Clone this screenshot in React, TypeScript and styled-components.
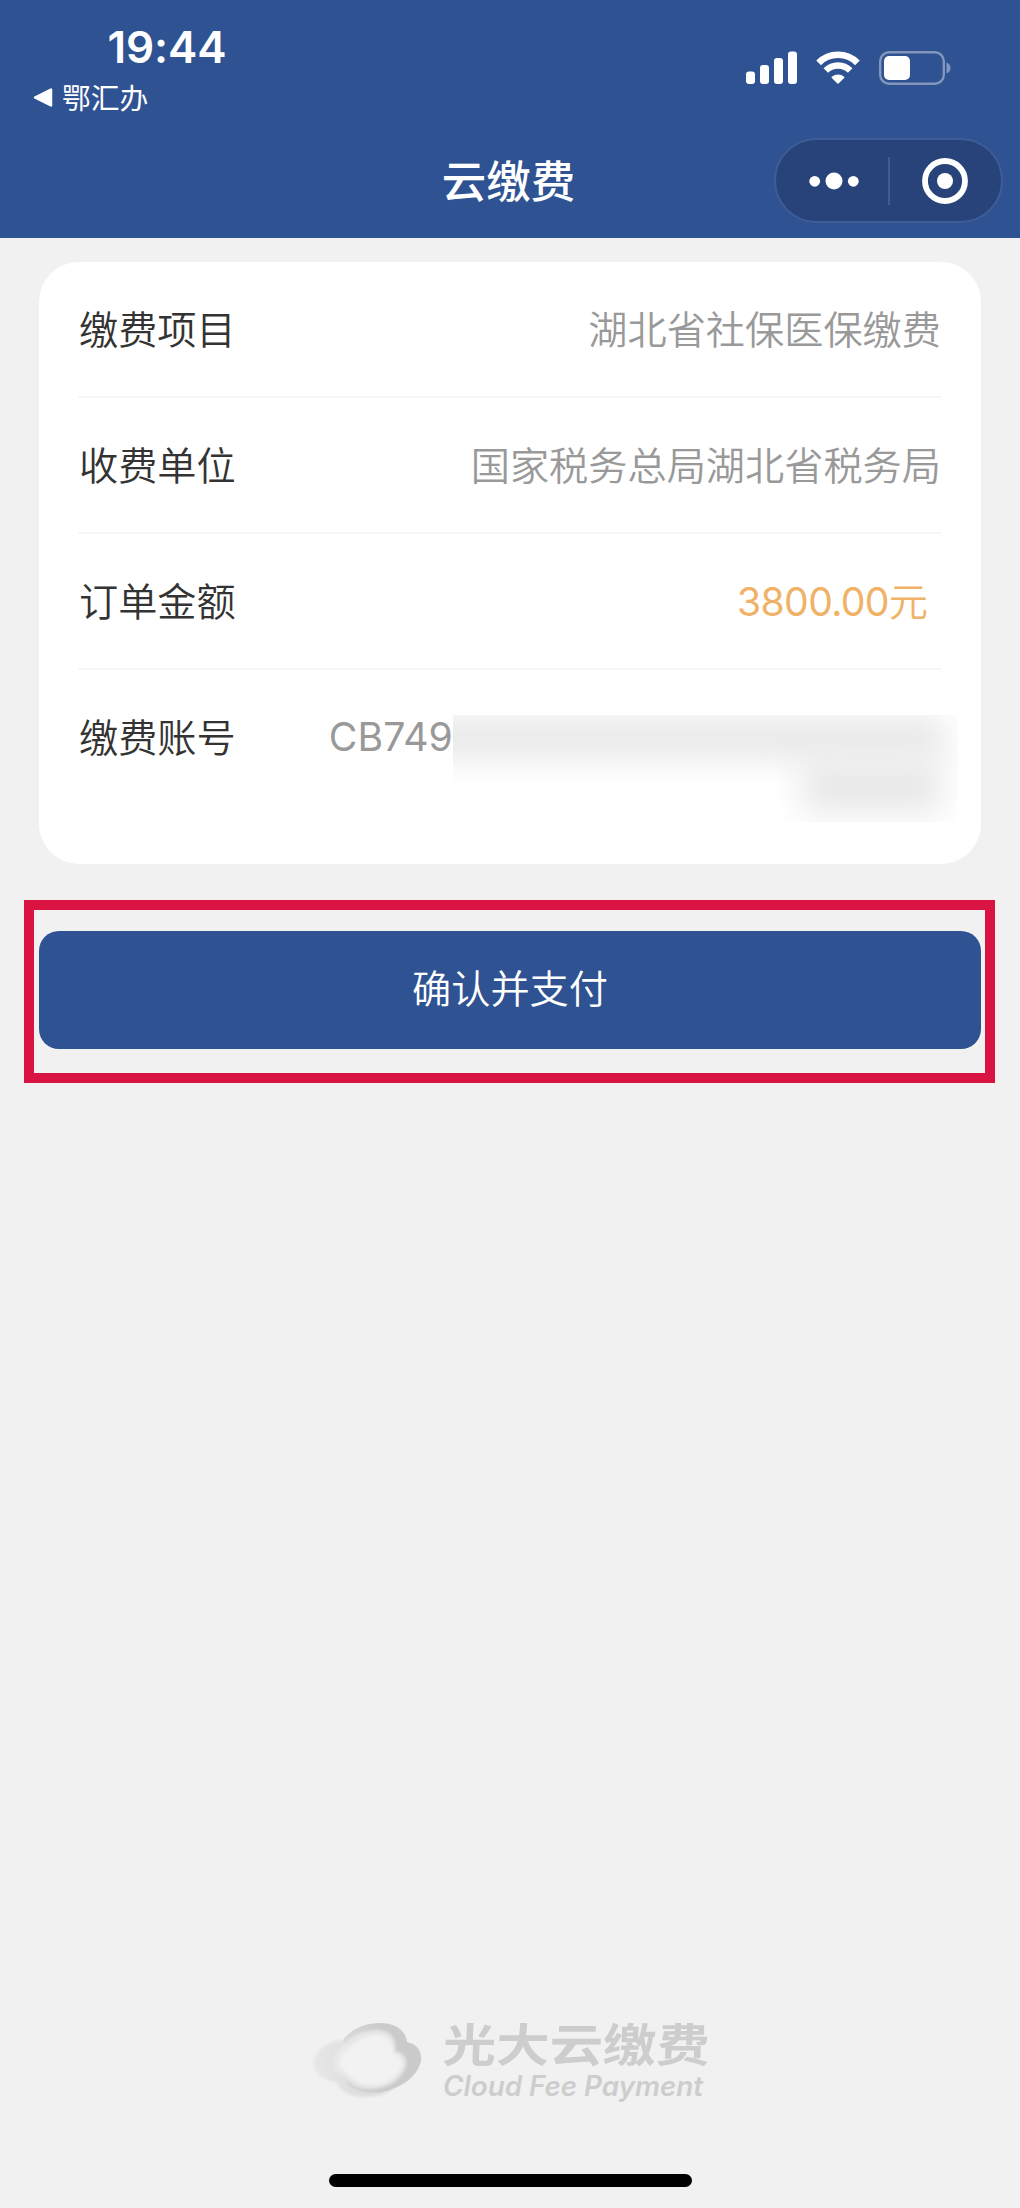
import React from "react";
import styled, { createGlobalStyle } from "styled-components";

const cjk = '"Noto Sans CJK SC", sans-serif';

const GlobalStyle = createGlobalStyle`
  * { box-sizing: border-box; }
  body { margin: 0; background: #f1f1f1; }
`;

const Screen = styled.div`
  width: 1020px;
  height: 2208px;
  display: flex;
  flex-direction: column;
  background: #f1f1f1;
  font-family: Inter, ${cjk};
  overflow: hidden;
`;

const Header = styled.header`
  height: 238px;
  flex: none;
  background: #2f5292;
  color: #fff;
  display: flex;
  flex-direction: column;
`;

const StatusBar = styled.div`
  height: 124px;
  padding: 20px 69px 0 32px;
  display: flex;
  justify-content: space-between;
`;

const Clock = styled.div`
  margin-left: 75.5px;
  font-size: 44px;
  line-height: 54px;
  font-weight: 600;
  letter-spacing: -0.1px;
`;

const BackLink = styled.div`
  display: flex;
  align-items: center;
  gap: 9px;
  height: 46px;
  font: 400 28.8px/46px ${cjk};
`;

const StatusIcons = styled.div`
  display: flex;
  align-items: center;
  gap: 19px;
  height: 36px;
  margin-top: 30px;
`;

const NavBar = styled.div`
  height: 114px;
  padding: 0 17px 1px 0;
  display: grid;
  grid-template-columns: 1fr 260px 1fr;
  align-items: center;
`;

const Title = styled.h1`
  grid-column: 2;
  margin: 0;
  padding-bottom: 4px;
  text-align: center;
  font: 500 44.5px/60px ${cjk};
  transform: translateX(7px);
`;

const Capsule = styled.div`
  justify-self: end;
  width: 229px;
  height: 85px;
  border: 2px solid #3f5c96;
  border-radius: 43px;
  background: #27437a;
  display: grid;
  grid-template-columns: 1fr 2px 1fr;
  align-items: center;
  justify-items: center;
`;

const CapsuleDivider = styled.span`
  width: 2px;
  height: 48px;
  background: #405b90;
`;

const Card = styled.section`
  flex: none;
  width: 942px;
  height: 602px;
  margin: 23.5px 0 0 39px;
  padding: 0 39px;
  border-radius: 40px;
  background: #fff;
`;

const Row = styled.div<{ $last?: boolean }>`
  display: flex;
  justify-content: space-between;
  height: 136px;
  padding: 36.5px 1px 0 1px;
  border-bottom: ${(p) => (p.$last ? "none" : "2px solid #f7f7f7")};
  font: 400 39.2px/58px ${cjk};
`;

const Label = styled.span`
  color: #333;
  font-weight: 350;
`;

const Value = styled.span<{ $amount?: boolean }>`
  color: ${(p) => (p.$amount ? "#f0b267" : "#999")};
  font-weight: 350;
  margin-right: ${(p) => (p.$amount ? "13px" : "0")};
`;

const Digits = styled.span<{ $tight?: boolean }>`
  font-family: Inter, sans-serif;
  font-weight: 400;
  letter-spacing: ${(p) => (p.$tight ? "-0.7px" : "0.1px")};
`;

const Account = styled.div`
  display: flex;
  margin-right: -17px;
  padding-top: 1.5px;
  color: #999;
`;

const Masked = styled.div`
  position: relative;
  width: 505px;
  height: 107px;
  margin-top: 7px;
  overflow: hidden;
`;

const Smudge = styled.i<{ $second?: boolean }>`
  position: absolute;
  left: ${(p) => (p.$second ? "350px" : "-60px")};
  top: ${(p) => (p.$second ? "44px" : "2px")};
  width: ${(p) => (p.$second ? "138px" : "552px")};
  height: ${(p) => (p.$second ? "54px" : "42px")};
  background: #e8e8e8;
  filter: blur(16px);
`;

const Highlight = styled.div`
  flex: none;
  width: 971px;
  height: 183px;
  margin: 36.5px 0 0 24px;
  padding: 21px 4px 0 5px;
  border: 10px solid #da1442;
`;

const PayButton = styled.button`
  display: block;
  width: 942px;
  height: 118px;
  padding: 0 0 8px;
  border: 0;
  border-radius: 20px;
  background: #2f5292;
  color: #fff;
  font: 350 39.2px/58px ${cjk};
`;

const Footer = styled.footer`
  margin-top: auto;
  display: flex;
  flex-direction: column;
  align-items: center;
`;

const Brand = styled.div`
  align-self: flex-start;
  display: flex;
  height: 94px;
  margin-left: 304px;
  gap: 9px;
  color: #cdcdcd;
`;

const BrandText = styled.div`
  width: 264px;
  padding-top: 3px;
`;

const BrandName = styled.div`
  font: 700 46px/50px ${cjk};
  transform: scaleX(1.16) skewX(-2deg);
  transform-origin: 0 50%;
  white-space: nowrap;
`;

const BrandSub = styled.div`
  margin-top: 3px;
  font: italic 600 27.8px/32px Inter, sans-serif;
  white-space: nowrap;
`;

const HomeBar = styled.div`
  width: 363px;
  height: 13px;
  margin: 66px 0 21px;
  border-radius: 7px;
  background: #000;
`;

const Signal = () => (
  <svg width="51" height="34" viewBox="0 0 51 34" fill="#fff">
    <rect x="0" y="20.5" width="9" height="12.5" rx="3" />
    <rect x="14" y="14" width="9" height="19" rx="3" />
    <rect x="28" y="7" width="9" height="26" rx="3" />
    <rect x="42" y="0.5" width="9" height="32.5" rx="3" />
  </svg>
);

const Wifi = () => (
  <svg width="44" height="34" viewBox="0 0 44 34" fill="none" stroke="#fff">
    <path d="M2.6 11.8A27.4 27.4 0 0 1 41.4 11.8" strokeWidth="6.6" />
    <path d="M9.8 19.6A17.2 17.2 0 0 1 34.2 19.6" strokeWidth="6.4" />
    <path d="M22 32L16.4 26.4A8.6 8.6 0 0 1 27.6 26.4Z" fill="#fff" strokeWidth="1.6" strokeLinejoin="round" />
  </svg>
);

const Battery = () => (
  <svg width="72" height="34" viewBox="0 0 72 34">
    <rect x="1.2" y="1.2" width="63.6" height="31.6" rx="9" fill="none" stroke="#8397be" strokeWidth="2.4" />
    <rect x="5" y="5" width="26" height="24" rx="5" fill="#fff" />
    <path d="M67.5 11.5Q71.5 13 71.5 17T67.5 22.5Z" fill="#8397be" />
  </svg>
);

const CloudLogo = () => (
  <svg width="130" height="94" viewBox="0 0 130 94">
    <defs>
      <linearGradient id="haze" x1="0" y1="0" x2="1" y2="0">
        <stop offset="0" stopColor="#e6e6e6" />
        <stop offset="1" stopColor="#d8d8d8" />
      </linearGradient>
      <linearGradient id="crest" x1="0" y1="0" x2="1" y2="0">
        <stop offset="0" stopColor="#d8d8d8" />
        <stop offset="0.5" stopColor="#cacaca" />
        <stop offset="1" stopColor="#cbcbcb" />
      </linearGradient>
      <filter id="soft" x="-20%" y="-20%" width="140%" height="140%">
        <feGaussianBlur stdDeviation="1.8" />
      </filter>
      <filter id="softer" x="-30%" y="-30%" width="160%" height="160%">
        <feGaussianBlur stdDeviation="4" />
      </filter>
    </defs>
    <path
      d="M40 27C24 25 11 37 10 49C9 59 20 66 32 68C36 77 46 83 60 83C72 83 84 79 90 74L60 30Z"
      fill="url(#haze)"
      filter="url(#soft)"
    />
    <path
      d="M39 26C48 14 62 9 76 9C92 9 102 17 103 28C113 30 118 37 117 46C115 62 96 75 77 78C63 80 50 77 43 70L45 45Z"
      fill="url(#crest)"
    />
    <path
      d="M39 31C48 20 62 15 75 16C87 17 93 25 91 37C100 39 103 44 102 51C99 65 84 75 66 75C54 75 45 70 40 61C32 60 28 54 29 47C30 40 34 35 39 31Z"
      fill="#e6e6e6"
      filter="url(#soft)"
    />
    <path
      d="M44 36C52 25 64 20 74 21C84 22 90 29 89 39C97 42 99 46 98 52C94 64 82 71 67 71C56 71 48 66 43 58C35 56 34 44 44 36Z"
      fill="#f2f2f2"
      filter="url(#soft)"
    />
    <ellipse cx="50" cy="47" rx="15" ry="12" fill="#f2f2f2" filter="url(#softer)" />
  </svg>
);

const MoreIcon = () => (
  <svg width="54" height="20" viewBox="-4 0 54 20" fill="#fff">
    <circle cx="5.7" cy="10.3" r="5.4" />
    <circle cx="25" cy="10" r="8.5" />
    <circle cx="44.3" cy="10.3" r="5.4" />
  </svg>
);

const TargetIcon = () => (
  <svg width="46" height="46" viewBox="0 0 46 46">
    <circle cx="23" cy="23" r="20" fill="none" stroke="#fff" strokeWidth="5.8" />
    <circle cx="23" cy="23" r="8" fill="#fff" />
  </svg>
);

export default function App() {
  return (
    <Screen>
      <GlobalStyle />
      <Header>
        <StatusBar>
          <div>
            <Clock>19:44</Clock>
            <BackLink>
              <svg width="21" height="20" viewBox="0 0 21 20">
                <path d="M3 10.5L19 2.5V18.5Z" fill="#fff" stroke="#fff" strokeWidth="2.5" strokeLinejoin="round" />
              </svg>
              鄂汇办
            </BackLink>
          </div>
          <StatusIcons>
            <Signal />
            <Wifi />
            <Battery />
          </StatusIcons>
        </StatusBar>
        <NavBar>
          <Title>云缴费</Title>
          <Capsule>
            <MoreIcon />
            <CapsuleDivider />
            <TargetIcon />
          </Capsule>
        </NavBar>
      </Header>

      <Card>
        <Row>
          <Label>缴费项目</Label>
          <Value>湖北省社保医保缴费</Value>
        </Row>
        <Row>
          <Label>收费单位</Label>
          <Value>国家税务总局湖北省税务局</Value>
        </Row>
        <Row>
          <Label>订单金额</Label>
          <Value $amount>
            <Digits $tight>3800.00</Digits>元
          </Value>
        </Row>
        <Row $last>
          <Label>缴费账号</Label>
          <Account>
            <Digits>CB749</Digits>
            <Masked>
              <Smudge />
              <Smudge $second />
            </Masked>
          </Account>
        </Row>
      </Card>

      <Highlight>
        <PayButton>确认并支付</PayButton>
      </Highlight>

      <Footer>
        <Brand>
          <CloudLogo />
          <BrandText>
            <BrandName>光大云缴费</BrandName>
            <BrandSub>Cloud Fee Payment</BrandSub>
          </BrandText>
        </Brand>
        <HomeBar />
      </Footer>
    </Screen>
  );
}
